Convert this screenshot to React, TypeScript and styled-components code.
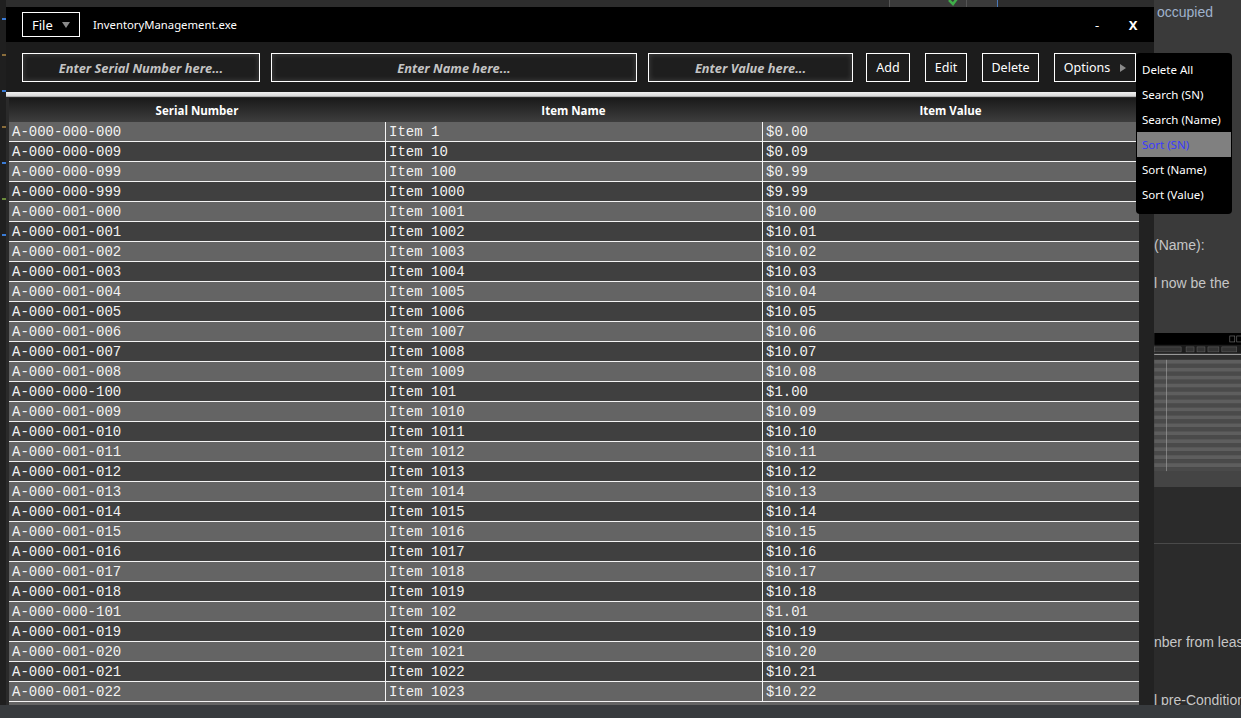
import React from 'react';
import styled, { createGlobalStyle } from 'styled-components';

const GlobalStyle = createGlobalStyle`
  html, body {
    margin: 0;
    padding: 0;
    background: #2b2b2b;
    overflow: hidden;
  }
  * {
    box-sizing: border-box;
  }
`;

const UI_FONT = `"Noto Sans", "Open Sans", "Liberation Sans", sans-serif`;

const Desktop = styled.div`
  position: relative;
  width: 1241px;
  height: 718px;
  overflow: hidden;
  display: flex;
  flex-direction: column;
`;

const Backdrop = styled.div`
  flex: 1;
  display: flex;
  min-height: 0;
`;

const Gutter = styled.div`
  width: 6px;
  background: #1f1f1f;
  display: flex;
  flex-direction: column;
  gap: 34px;
  padding-top: 18px;
`;

const GutterMark = styled.div<{ $color: string }>`
  width: 4px;
  height: 2px;
  margin-left: 2px;
  background: ${({ $color }) => $color};
`;

const BehindArea = styled.div`
  width: 1148px;
  background: #2b2b2b;
  display: flex;
  flex-direction: column;
`;

const BehindStrip = styled.div`
  height: 7px;
  display: flex;
  justify-content: flex-end;
  padding-right: 156px;
  background: #2d2d2d;
`;

const StripCell = styled.div<{ $w: number; $edge?: string }>`
  width: ${({ $w }) => $w}px;
  height: 7px;
  border-left: 1px solid ${({ $edge }) => $edge ?? '#555'};
  background: #3a3a3a;
  position: relative;
  overflow: hidden;
`;

const SidePane = styled.div`
  flex: 1;
  display: flex;
  flex-direction: column;
  font-family: "Liberation Sans", Arial, sans-serif;
  font-size: 14px;
  color: #c6c6c6;
  overflow: hidden;
  white-space: nowrap;
`;

const SideUpper = styled.div`
  background: #3a3a3a;
  height: 487px;
  display: flex;
  flex-direction: column;
`;

const SideLower = styled.div`
  flex: 1;
  background: #2b2b2b;
  display: flex;
  flex-direction: column;
`;

const SideText = styled.div<{ $top: number; $indent?: number; $blue?: boolean }>`
  margin-top: ${({ $top }) => $top}px;
  padding-left: ${({ $indent }) => $indent ?? 0}px;
  line-height: 16px;
  color: ${({ $blue }) => ($blue ? '#9fb2cc' : '#c6c6c6')};
`;

const Thumb = styled.svg`
  display: block;
  margin-top: 42px;
`;

const SideRule = styled.div`
  margin-top: 56px;
  height: 1px;
  background: #4a4a4a;
`;

const StatusStrip = styled.div`
  height: 13px;
  background: #383b3e;
`;

/* the app window sits on the desktop like any other window */
const Window = styled.div`
  position: absolute;
  left: 6px;
  top: 7px;
  width: 1148px;
  height: 698px;
  display: flex;
  flex-direction: column;
  background: #222;
  font-family: ${UI_FONT};
  color: #fff;
`;

const TitleBar = styled.div`
  height: 35px;
  background: #000;
  display: flex;
  align-items: center;
  padding: 0 3px 0 16px;
`;

const FileButton = styled.div`
  width: 58px;
  height: 25px;
  border: 1px solid #fff;
  display: flex;
  align-items: center;
  padding-left: 9px;
  gap: 9px;
  font-size: 13px;
`;

const Caret = styled.span<{ $dir: 'down' | 'right' }>`
  width: 0;
  height: 0;
  ${({ $dir }) =>
    $dir === 'down'
      ? `border-left: 4.5px solid transparent;
         border-right: 4.5px solid transparent;
         border-top: 6px solid #8a8a8a;`
      : `border-top: 4.5px solid transparent;
         border-bottom: 4.5px solid transparent;
         border-left: 6px solid #8a8a8a;`}
`;

const TitleText = styled.div`
  margin-left: 13px;
  font-size: 11.3px;
  flex: 1;
`;

const WinControl = styled.div<{ $bold?: boolean }>`
  width: 36px;
  text-align: center;
  font-size: 13px;
  font-weight: ${({ $bold }) => ($bold ? 700 : 400)};
`;

const Toolbar = styled.div`
  height: 50px;
  background: #1c1c1c;
  display: flex;
  align-items: flex-start;
  padding: 11px 0 0 16px;
`;

const Field = styled.div<{ $w: number; $gap: number }>`
  width: ${({ $w }) => $w}px;
  margin-right: ${({ $gap }) => $gap}px;
  height: 29px;
  border: 1px solid #fff;
  background: #1e1e1e;
  box-shadow: inset 0 0 5px 1px rgba(255, 255, 255, 0.13);
  display: flex;
  align-items: center;
  justify-content: center;
  font-family: "Open Sans", sans-serif;
  font-style: italic;
  font-weight: 700;
  font-size: 12.8px;
  color: #c4c4c4;
`;

const ToolButton = styled.div<{ $w: number; $gap: number }>`
  width: ${({ $w }) => $w}px;
  margin-right: ${({ $gap }) => $gap}px;
  height: 29px;
  border: 1px solid #fff;
  display: flex;
  align-items: center;
  justify-content: center;
  gap: 10px;
  font-size: 12.5px;
  position: relative;
`;

const Menu = styled.div`
  position: absolute;
  left: calc(100% + 1px);
  top: -1px;
  width: 96px;
  padding: 4px 1px 7px 1px;
  background: #000;
  border-radius: 4px;
  z-index: 5;
`;

const MenuItem = styled.div<{ $active?: boolean }>`
  height: 25px;
  display: flex;
  align-items: center;
  padding-left: 5px;
  font-size: 11.5px;
  color: ${({ $active }) => ($active ? '#3a3aff' : '#fff')};
  background: ${({ $active }) => ($active ? '#808080' : 'transparent')};
`;

const Divider = styled.div`
  height: 5px;
  background: linear-gradient(#f0f0f0, #dcdcdc 70%, #9a9a9a);
`;

const TableWrap = styled.div`
  flex: 1;
  min-height: 0;
  display: flex;
  background: #2a2a2a;
  padding: 1px 0 0 3px;
`;

const Table = styled.div`
  width: 1130px;
  display: flex;
  flex-direction: column;
  overflow: hidden;
  background: linear-gradient(#2a2a2a 0, #2a2a2a 24px, #646464 24px);
`;

const ScrollGap = styled.div`
  flex: 1;
  background: #222;
`;

const HeaderRow = styled.div`
  height: 24px;
  flex-shrink: 0;
  display: grid;
  grid-template-columns: 376px 377px 377px;
  background: linear-gradient(#1a1a1a, #3e3e3e);
`;

const HeaderCell = styled.div`
  display: flex;
  align-items: center;
  justify-content: center;
  font-family: "Open Sans", sans-serif;
  font-weight: 700;
  font-size: 11.5px;
  color: #fff;
`;

const Row = styled.div<{ $odd: boolean }>`
  height: 20px;
  flex-shrink: 0;
  display: grid;
  grid-template-columns: 376px 377px 377px;
  background: ${({ $odd }) => ($odd ? '#646464' : '#404040')};
  border-bottom: 1px solid #f4f4f4;
`;

const Cell = styled.div<{ $first?: boolean }>`
  padding: 1px 0 0 3px;
  border-left: ${({ $first }) => ($first ? 'none' : '1px solid #f4f4f4')};
  font-family: "Liberation Mono", "Courier New", monospace;
  font-size: 14px;
  line-height: 18px;
  color: #f2f2f2;
  white-space: nowrap;
`;

interface Item {
  serial: string;
  name: string;
  value: string;
}

const makeItems = (): Item[] => {
  const list: Item[] = [];
  for (let n = 0; n < 1200; n++) {
    const digits = String(n).padStart(9, '0');
    list.push({
      serial: `A-${digits.slice(0, 3)}-${digits.slice(3, 6)}-${digits.slice(6)}`,
      name: `Item ${n + 1}`,
      value: `$${(n / 100).toFixed(2)}`,
    });
  }
  list.sort((a, b) => (a.name < b.name ? -1 : a.name > b.name ? 1 : 0));
  return list.slice(0, 29);
};

const items = makeItems();

const menuItems = ['Delete All', 'Search (SN)', 'Search (Name)', 'Sort (SN)', 'Sort (Name)', 'Sort (Value)'];

const Thumbnail = () => (
  <Thumb width="90" height="155" viewBox="0 0 90 155">
    <rect x="0" y="0" width="90" height="155" fill="#444" />
    <rect x="0" y="0" width="90" height="12" fill="#000" />
    <rect x="76" y="3" width="5" height="6" fill="none" stroke="#777" strokeWidth="0.6" />
    <rect x="83" y="3" width="5" height="6" fill="none" stroke="#777" strokeWidth="0.6" />
    <rect x="0" y="12" width="90" height="9" fill="#1c1c1c" />
    <rect x="0" y="14" width="27" height="5" fill="#333" stroke="#666" strokeWidth="0.5" />
    <rect x="32" y="14" width="8" height="5" fill="#333" stroke="#666" strokeWidth="0.5" />
    <rect x="43" y="14" width="8" height="5" fill="#333" stroke="#666" strokeWidth="0.5" />
    <rect x="54" y="14" width="11" height="5" fill="#333" stroke="#666" strokeWidth="0.5" />
    <rect x="68" y="14" width="15" height="5" fill="#333" stroke="#666" strokeWidth="0.5" />
    <rect x="0" y="21" width="90" height="1" fill="#bbb" />
    <rect x="0" y="22" width="90" height="5" fill="#2e2e2e" />
    {Array.from({ length: 28 }).map((_, i) => (
      <rect key={i} x="0" y={27 + i * 4} width="90" height="4" fill={i % 2 ? '#4a4a4a' : '#5e5e5e'} />
    ))}
    <rect x="12" y="27" width="0.7" height="112" fill="#999" />
  </Thumb>
);

const App: React.FC = () => {
  return (
    <Desktop>
      <GlobalStyle />
      <Backdrop>
        <Gutter>
          <GutterMark $color="#3a7bd5" />
          <GutterMark $color="#8a6d3b" />
          <GutterMark $color="#3a7bd5" />
          <GutterMark $color="#8a6d3b" />
          <GutterMark $color="#3a7bd5" />
          <GutterMark $color="#6a8a3b" />
          <GutterMark $color="#3a7bd5" />
        </Gutter>
        <BehindArea>
          <BehindStrip>
            <StripCell $w={77}>
              <svg width="14" height="14" viewBox="0 0 14 14" style={{ position: 'absolute', left: 57, top: -7 }}>
                <path d="M2 7 L6 11 L12 3" fill="none" stroke="#3fae49" strokeWidth="2.5" />
              </svg>
            </StripCell>
            <StripCell $w={31} />
            <StripCell $w={1} $edge="#4a78b8" />
          </BehindStrip>
        </BehindArea>
        <SidePane>
          <SideUpper>
            <SideText $top={4} $indent={3} $blue>occupied</SideText>
            <SideText $top={217}>(Name):</SideText>
            <SideText $top={22} $indent={0}>l now be the</SideText>
            <Thumbnail />
          </SideUpper>
          <SideLower>
            <SideRule />
            <SideText $top={90}>nber from least</SideText>
            <SideText $top={42}>l pre-Condition</SideText>
          </SideLower>
        </SidePane>
      </Backdrop>
      <StatusStrip />

      <Window>
        <TitleBar>
          <FileButton>
            File <Caret $dir="down" />
          </FileButton>
          <TitleText>InventoryManagement.exe</TitleText>
          <WinControl>-</WinControl>
          <WinControl $bold>X</WinControl>
        </TitleBar>
        <Toolbar>
          <Field $w={238} $gap={11}>Enter Serial Number here...</Field>
          <Field $w={366} $gap={11}>Enter Name here...</Field>
          <Field $w={205} $gap={13}>Enter Value here...</Field>
          <ToolButton $w={44} $gap={15}>Add</ToolButton>
          <ToolButton $w={42} $gap={15}>Edit</ToolButton>
          <ToolButton $w={57} $gap={15}>Delete</ToolButton>
          <ToolButton $w={82} $gap={0}>
            Options <Caret $dir="right" />
            <Menu>
              {menuItems.map((m) => (
                <MenuItem key={m} $active={m === 'Sort (SN)'}>
                  {m}
                </MenuItem>
              ))}
            </Menu>
          </ToolButton>
        </Toolbar>
        <Divider />
        <TableWrap>
          <Table>
            <HeaderRow>
              <HeaderCell>Serial Number</HeaderCell>
              <HeaderCell>Item Name</HeaderCell>
              <HeaderCell>Item Value</HeaderCell>
            </HeaderRow>
            {items.map((it, i) => (
              <Row key={it.serial} $odd={i % 2 === 0}>
                <Cell $first>{it.serial}</Cell>
                <Cell>{it.name}</Cell>
                <Cell>{it.value}</Cell>
              </Row>
            ))}
          </Table>
          <ScrollGap />
        </TableWrap>
      </Window>
    </Desktop>
  );
};

export default App;
